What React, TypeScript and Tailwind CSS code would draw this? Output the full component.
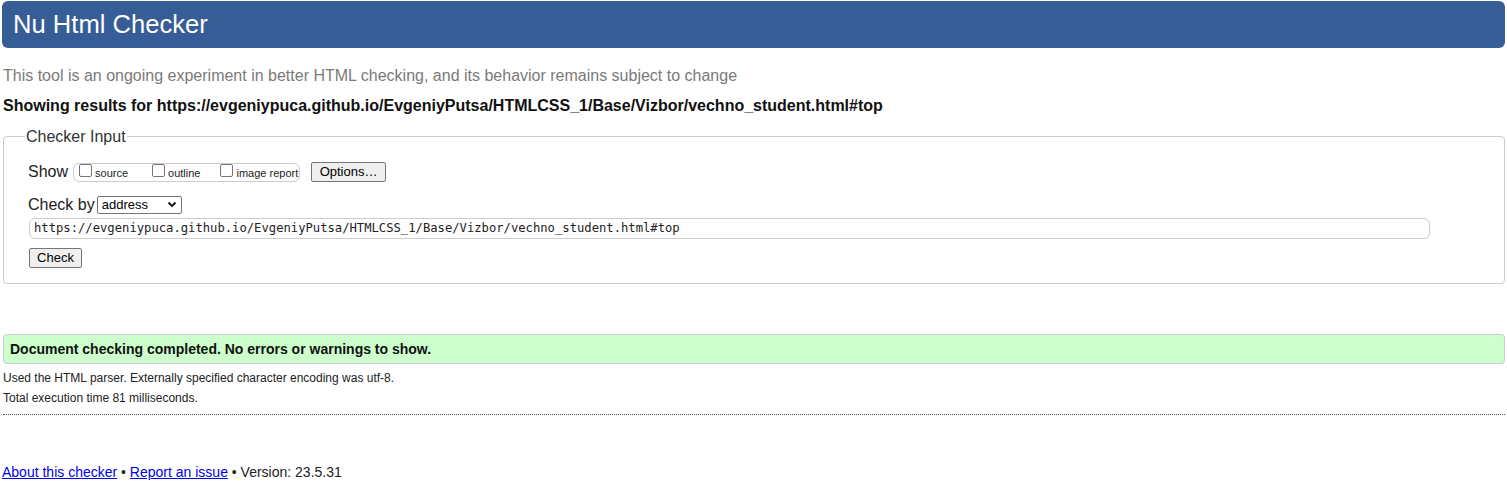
import React from 'react';

const url = 'https://evgeniypuca.github.io/EvgeniyPutsa/HTMLCSS_1/Base/Vizbor/vechno_student.html#top';

export default function App() {
  return (
    <div className="min-h-[492px] bg-white px-[2px] pt-[1px] font-['Liberation_Sans',Arial,sans-serif] text-[#222]">
      {/* Header */}
      <div className="h-[47px] rounded-[6px] bg-[#365d95] pl-[11px] flex items-center">
        <h1 className="text-[25.6px] leading-none text-white">Nu Html Checker</h1>
      </div>

      <p className="mt-[18px] pl-[1px] text-[16px] leading-[19px] text-[#7a7a7a]">
        This tool is an ongoing experiment in better HTML checking, and its behavior remains subject to change
      </p>
      <p className="mt-[11px] pl-[1px] text-[16px] leading-[19px] font-bold text-[#111]">
        Showing results for {url}
      </p>

      {/* Checker Input */}
      <fieldset className="mt-[12px] ml-[1px] border border-[#ccc] rounded-[4px] px-[25px] pt-[16px] pb-[15px]">
        <legend className="px-[1px] -ml-[4px] text-[16px] leading-[19px] text-[#333]">Checker Input</legend>
        <div className="flex items-center h-[20px]">
          <span className="text-[16px] text-[#222] -ml-[1px]">Show</span>
          <div className="ml-[5px] h-[19px] w-[227px] border border-[#ccc] rounded-[6px] flex items-center pl-[5px] text-[11px] text-[#222]">
            <label className="flex items-center">
              <span className="inline-block w-[13px] h-[13px] border border-[#767676] rounded-[2px] bg-white mr-[3px] -mt-[3px]" />
              <span className="mt-[2px]">source</span>
            </label>
            <label className="flex items-center ml-[24px]">
              <span className="inline-block w-[13px] h-[13px] border border-[#767676] rounded-[2px] bg-white mr-[3px] -mt-[3px]" />
              <span className="mt-[2px]">outline</span>
            </label>
            <label className="flex items-center ml-[20px]">
              <span className="inline-block w-[13px] h-[13px] border border-[#767676] rounded-[2px] bg-white mr-[3px] -mt-[3px]" />
              <span className="mt-[2px]">image report</span>
            </label>
          </div>
          <button className="ml-[11px] h-[20px] w-[75px] border border-[#767676] rounded-[2px] bg-[#efefef] text-[13px] text-black flex items-center justify-center">
            Options…
          </button>
        </div>

        <div className="flex items-center mt-[13px] h-[19px]">
          <span className="text-[16px] text-[#222] -ml-[1px]">Check by</span>
          <div className="ml-[2px] h-[18px] w-[85px] border border-[#767676] rounded-[2px] bg-white flex items-center justify-between pl-[4px] pr-[4px] text-[13px] text-black">
            <span>address</span>
            <svg width="10" height="7" viewBox="0 0 10 7">
              <path d="M1.5 1.5 L5 5 L8.5 1.5" fill="none" stroke="#111" strokeWidth="1.8" />
            </svg>
          </div>
        </div>

        <div className="mt-[4px] mr-[49px] h-[21px] border border-[#ccc] rounded-[6px] flex items-center pl-[4px] font-['DejaVu_Sans_Mono','Liberation_Mono',monospace] text-[12.2px] text-[#222]">
          {url}
        </div>

        <button className="mt-[9px] h-[20px] w-[53px] border border-[#767676] rounded-[2px] bg-[#efefef] text-[13px] text-black flex items-center justify-center">
          Check
        </button>
      </fieldset>

      {/* Result */}
      <div className="mt-[50px] ml-[1px] h-[30px] border border-[#ccc] rounded-[4px] bg-[#ccffcc] flex items-center pl-[6px]">
        <span className="text-[14px] font-bold text-[#111]">Document checking completed. No errors or warnings to show.</span>
      </div>
      <p className="mt-[7px] pl-[1px] text-[12px] leading-[14px] text-[#222]">
        Used the HTML parser. Externally specified character encoding was utf-8.
      </p>
      <p className="mt-[6px] pl-[1px] text-[12px] leading-[14px] text-[#222]">
        Total execution time 81 milliseconds.
      </p>
      <div className="mt-[9px] ml-[1px] border-t border-dotted border-[#555]" />

      <p className="mt-[49px] text-[14px] leading-[16px] text-[#222]">
        <a href="#" className="text-[#0000ee] underline">About this checker</a>
        {' • '}
        <a href="#" className="text-[#0000ee] underline">Report an issue</a>
        {' • Version: 23.5.31'}
      </p>
    </div>
  );
}
